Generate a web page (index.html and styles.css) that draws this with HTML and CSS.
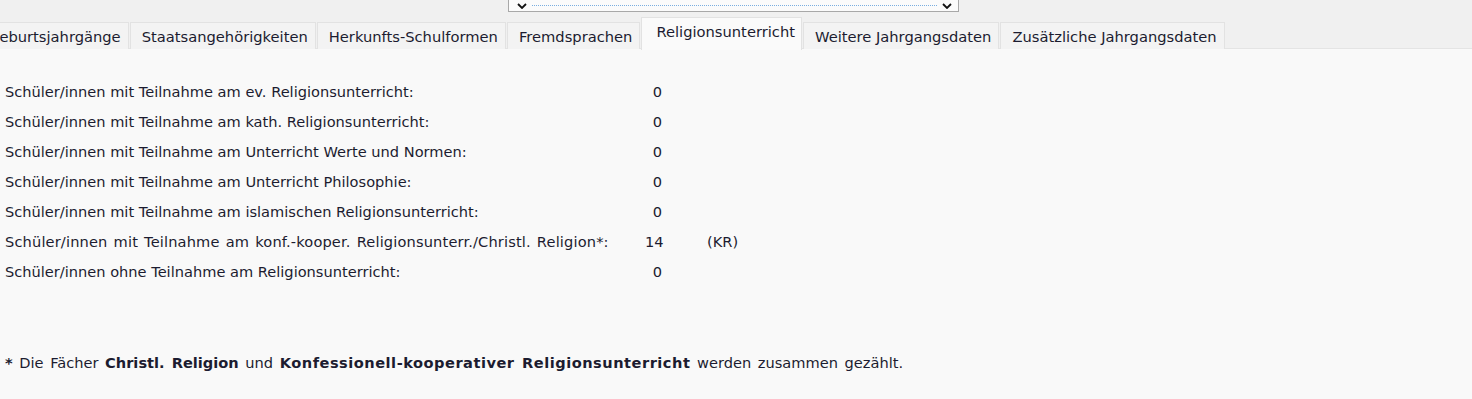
FILE: index.html
```html
<!DOCTYPE html>
<html lang="de">
<head>
<meta charset="utf-8">
<title>Religionsunterricht</title>
<link rel="stylesheet" href="styles.css">
</head>
<body>
<div class="top">
  <div class="combo">
    <svg class="chev" viewBox="0 0 10 6" width="10" height="6"><path d="M1 1 L5 5 L9 1" fill="none" stroke="#111" stroke-width="1.8"/></svg>
    <div class="dots"></div>
    <svg class="chev" viewBox="0 0 10 6" width="10" height="6"><path d="M1 1 L5 5 L9 1" fill="none" stroke="#111" stroke-width="1.8"/></svg>
  </div>
  <div class="tabs">
    <div class="tab first">Geburtsjahrgänge</div>
    <div class="tab">Staatsangehörigkeiten</div>
    <div class="tab">Herkunfts-Schulformen</div>
    <div class="tab">Fremdsprachen</div>
    <div class="tab active">Religionsunterricht</div>
    <div class="tab">Weitere Jahrgangsdaten</div>
    <div class="tab">Zusätzliche Jahrgangsdaten</div>
  </div>
</div>
<div class="content">
  <div class="rows">
    <div class="label">Schüler/innen mit Teilnahme am ev. Religionsunterricht:</div><div class="val">0</div><div class="extra"></div>
    <div class="label">Schüler/innen mit Teilnahme am kath. Religionsunterricht:</div><div class="val">0</div><div class="extra"></div>
    <div class="label">Schüler/innen mit Teilnahme am Unterricht Werte und Normen:</div><div class="val">0</div><div class="extra"></div>
    <div class="label">Schüler/innen mit Teilnahme am Unterricht Philosophie:</div><div class="val">0</div><div class="extra"></div>
    <div class="label">Schüler/innen mit Teilnahme am islamischen Religionsunterricht:</div><div class="val">0</div><div class="extra"></div>
    <div class="label wide">Schüler/innen mit Teilnahme am konf.-kooper. Religionsunterr./Christl. Religion*:</div><div class="val">14</div><div class="extra">(KR)</div>
    <div class="label">Schüler/innen ohne Teilnahme am Religionsunterricht:</div><div class="val">0</div><div class="extra"></div>
  </div>
  <p class="note"><span class="star">*</span> Die Fächer <b>Christl. Religion</b> und <b class="long">Konfessionell-kooperativer Religionsunterricht</b> werden zusammen gezählt.</p>
</div>
</body>
</html>
```
FILE: styles.css
```css
html, body {
  margin: 0;
  padding: 0;
}
body {
  background: #f9f9f9;
  font-family: "DejaVu Sans", sans-serif;
  font-size: 14.6px;
  color: #1c1c30;
  width: 1472px;
  height: 399px;
  overflow: hidden;
}
.top {
  background: #f0f0f0;
  height: 49px;
  border-bottom: 1px solid #e4e4e4;
  box-sizing: border-box;
}
.combo {
  margin-left: 508px;
  width: 451px;
  height: 12px;
  box-sizing: border-box;
  background: #fbfbfb;
  border: 1px solid #a8a8a8;
  border-top: none;
  display: flex;
  align-items: center;
  padding: 0 6px 0 8px;
  gap: 5px;
}
.chev {
  flex: none;
}
.dots {
  flex: 1;
  height: 0;
  border-top: 1px dotted #7aaee0;
}
.tabs {
  display: flex;
  margin-left: -24px;
  margin-top: 9px;
  height: 28px;
  align-items: flex-end;
  gap: 1px;
  font-size: 14.7px;
}
.tab {
  height: 27px;
  box-sizing: border-box;
  padding: 0 7px 0 11px;
  display: flex;
  align-items: center;
  background: #f3f3f3;
  border: 1px solid #e2e2e2;
  border-bottom: none;
  white-space: nowrap;
}
.tab.active {
  height: 33px;
  margin-bottom: -1px;
  padding: 0 6px 6px 14px;
  background: #fafafa;
  position: relative;
}
.content {
  padding: 27px 0 0 5px;
}
.rows {
  display: grid;
  grid-template-columns: 640px 17px 77px;
  grid-auto-rows: 30px;
  align-items: center;
}
.label.wide {
  word-spacing: 1.3px;
  letter-spacing: 0.15px;
}
.val {
  text-align: right;
}
.extra {
  padding-left: 45px;
}
.note {
  margin: 68px 0 0 0;
  word-spacing: 2px;
}
.star {
  font-weight: bold;
}
b {
  font-weight: bold;
}
b.long {
  letter-spacing: 0.5px;
}
```
